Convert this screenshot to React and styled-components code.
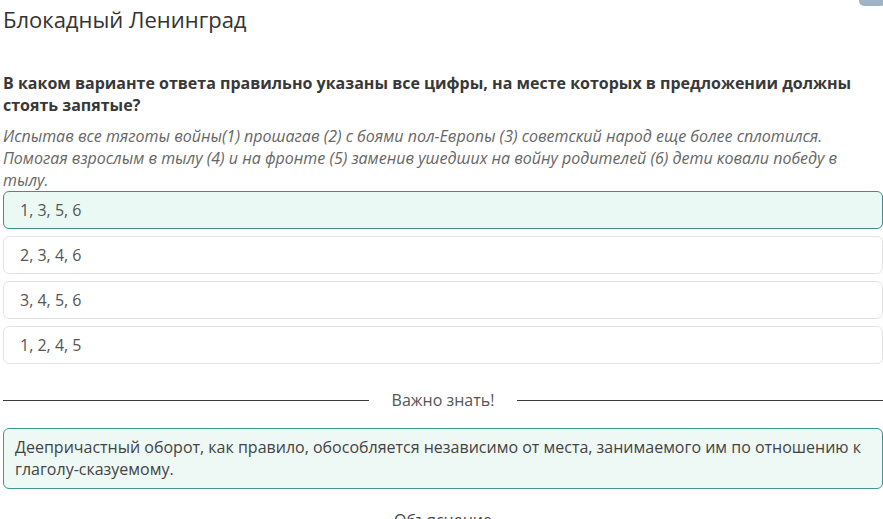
import React from 'react';
import styled, { createGlobalStyle } from 'styled-components';

const GlobalStyle = createGlobalStyle`
    html, body {
        margin: 0;
        padding: 0;
        background: #fff;
        overflow: hidden;
    }
    body {
        font-family: "Open Sans", "Liberation Sans", sans-serif;
        color: #333;
    }
`

const Page = styled.div`
    position: relative;
    width: 880px;
    padding: 0 0 0 3px;
`

const CornerButton = styled.div`
    position: absolute;
    top: -20px;
    right: -3px;
    width: 27px;
    height: 26px;
    background: #9fb3c6;
    border-radius: 5px;
`

const Title = styled.h1`
    margin: 0;
    padding-top: 4px;
    font-size: 22px;
    font-weight: 400;
    line-height: 30px;
    color: #333;
`

const Question = styled.h2`
    margin: 38px 0 0;
    font-size: 16px;
    font-weight: 700;
    line-height: 22px;
    color: #383838;
`

const Sentence = styled.p`
    margin: 9px 0 0;
    font-size: 16px;
    font-style: italic;
    line-height: 22px;
    color: #666;
`

const Options = styled.div`
    display: flex;
    flex-direction: column;
    gap: 7px;
`

const Option = styled.div`
    box-sizing: border-box;
    height: 38px;
    display: flex;
    align-items: center;
    padding-left: 16px;
    font-size: 16px;
    color: #555;
    border: 1px solid ${(props) => props.selected ? '#3f8f88' : '#e4e4e4'};
    background: ${(props) => props.selected ? '#ebf9f4' : '#fff'};
    border-radius: 6px;
`

const Divider = styled.div`
    display: flex;
    align-items: center;
    margin-top: 25px;
    height: 22px;
    font-size: 16px;
    color: #555;
    &::before, &::after {
        content: '';
        flex: 1;
        height: 1px;
        background: #3c3c3c;
    }
    span {
        padding: 0 23px;
    }
`

const InfoBox = styled.div`
    box-sizing: border-box;
    margin-top: 17px;
    padding: 7px 11px 8px;
    min-height: 61px;
    font-size: 16px;
    line-height: 22px;
    color: #444;
    border: 1px solid #3f978d;
    background: #eef8f5;
    border-radius: 6px;
`

const NextHeading = styled.div`
    margin-top: 20px;
    text-align: center;
    font-size: 16px;
    color: #444;
`

const options = ['1, 3, 5, 6', '2, 3, 4, 6', '3, 4, 5, 6', '1, 2, 4, 5'];

export default function App() {
    return (
        <>
            <GlobalStyle />
            <Page>
                <CornerButton />
                <Title>Блокадный Ленинград</Title>
                <Question>
                    В каком варианте ответа правильно указаны все цифры, на месте которых в предложении должны стоять запятые?
                </Question>
                <Sentence>
                    Испытав все тяготы войны(1) прошагав (2) с боями пол-Европы (3) советский народ еще более сплотился. Помогая взрослым в тылу (4) и на фронте (5) заменив ушедших на войну родителей (6) дети ковали победу в тылу.
                </Sentence>
                <Options>
                    {options.map((item, i) => (
                        <Option key={item} selected={i === 0}>{item}</Option>
                    ))}
                </Options>
                <Divider><span>Важно знать!</span></Divider>
                <InfoBox>
                    Деепричастный оборот, как правило, обособляется независимо от места, занимаемого им по отношению к глаголу-сказуемому.
                </InfoBox>
                <NextHeading>Объяснение</NextHeading>
            </Page>
        </>
    )
}
